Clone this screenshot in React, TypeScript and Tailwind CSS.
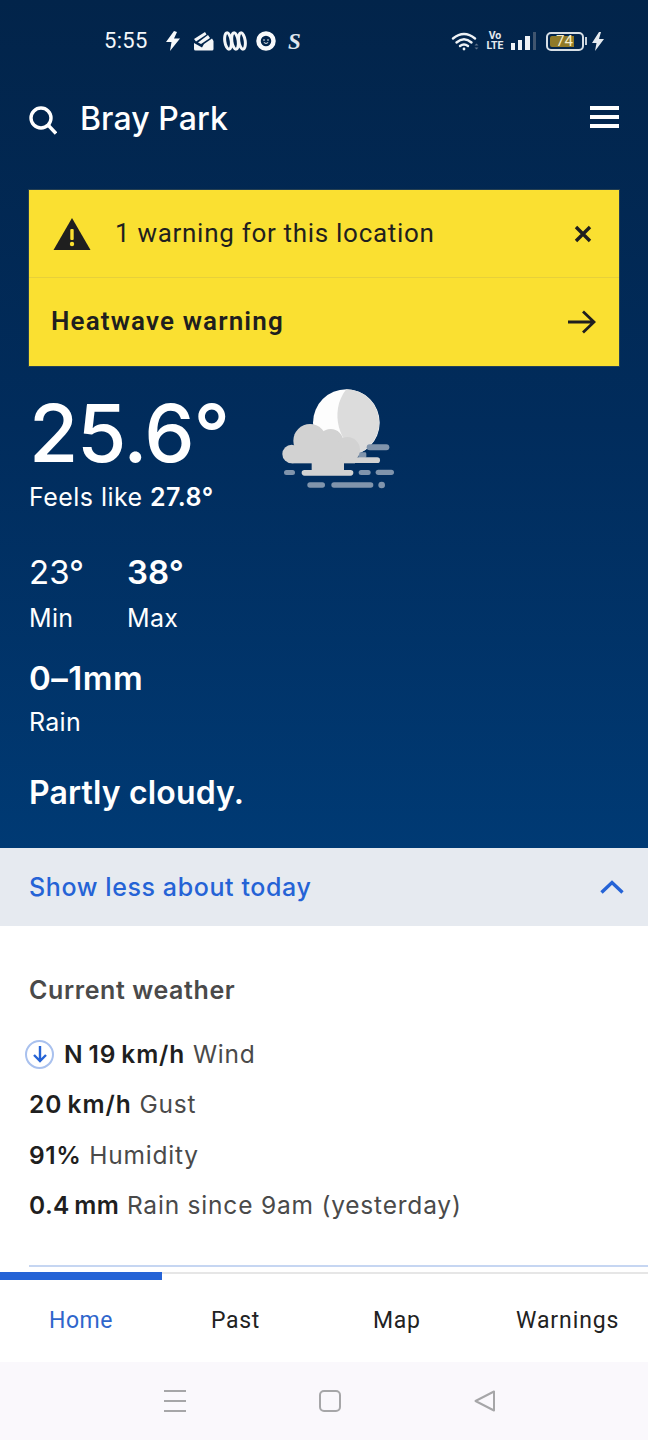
import React from "react";

const inter = "font-['Inter',sans-serif]";
const roboto = "font-['Roboto',sans-serif]";

function StatusLeft() {
  return (
    <div className="flex items-center pl-[104px]">
      <span className={`${roboto} text-[22px] leading-none text-[#f4f7fa] tracking-[0.3px] w-[60px]`}>5:55</span>
      <svg width="18" height="20" viewBox="0 0 18 20"><path d="M10 0 2 11h5.500L6 20l10-12.500h-6L13 1z" fill="#f8fafc" /></svg>
      <svg width="21" height="20" viewBox="0 0 21 20" className="ml-[11px]" fill="#f4f6f8"><path d="M1 8 12 1l1.500 2.500L3 10.500zM5 11.500 15 4l2 3L8 13zM11 13l8-5.500 1.500 2.500v8a1.500 1.500 0 0 1-1.500 1.500H2.500A1.500 1.500 0 0 1 1 18v-6l8 4.500z" /></svg>
      <svg width="24" height="20" viewBox="0 0 24 20" className="ml-[9px]" fill="none" stroke="#f4f6f8" strokeWidth="3"><ellipse cx="5" cy="10" rx="3.200" ry="8.200" transform="rotate(-8 5 10)" /><ellipse cx="12" cy="10" rx="3.200" ry="8.200" transform="rotate(-8 12 10)" /><ellipse cx="19" cy="10" rx="3.200" ry="8.200" transform="rotate(-8 19 10)" /></svg>
      <svg width="20" height="20" viewBox="0 0 20 20" className="ml-[9px]"><circle cx="10" cy="10" r="7.500" fill="none" stroke="#f8fafc" strokeWidth="4.500" /><circle cx="8" cy="9" r="0.800" fill="#f8fafc" /><circle cx="12" cy="9" r="0.800" fill="#f8fafc" /><path d="M7.800 11.500q2.200 2 4.400 0" stroke="#f8fafc" fill="none" strokeWidth="0.900" /></svg>
      <span className="ml-[12px] font-['Liberation_Serif',serif] italic font-bold text-[23px] leading-none text-[#dfe6ee]">S</span>
    </div>
  );
}

function StatusRight() {
  return (
    <div className="flex items-center pr-[44px]">
      <svg width="28" height="20" viewBox="0 0 28 20" fill="none" stroke="#eef2f6" strokeLinecap="round" strokeWidth="2.400"><path d="M2 7.500Q13-1.500 24 7.500" /><path d="M5.500 11.500Q13 5 20.500 11.500" /><path d="M9 15Q13 12 17 15" /><circle cx="13" cy="18" r="1.400" fill="#eef2f6" stroke="none" /><path d="M23.500 14.500l2-2 2 2zM23.500 16.500l2 2 2-2z" fill="#5f738a" stroke="none" /></svg>
      <div className={`ml-[9px] w-[14px] flex flex-col items-center ${roboto} text-[10.500px] leading-[10px] font-bold text-[#e5eaef]`}><span>Vo</span><span>LTE</span></div>
      <div className="ml-[9px] flex items-end gap-[3px] h-[18px]">
        <span className="w-[4px] h-[7px] bg-[#eef2f6]" />
        <span className="w-[4px] h-[10px] bg-[#eef2f6]" />
        <span className="w-[5px] h-[14px] bg-[#eef2f6]" />
        <span className="w-[3px] h-[18px] bg-[#40556f]" />
      </div>
      <div className="ml-[10px] w-[38px] h-[19px] border-2 border-[#d7dfe6] rounded-[5px] p-[2px] flex">
        <span className={`w-[24px] bg-[#8f7a28] rounded-l-[2px] pl-[6px] ${roboto} text-[15px] leading-[11px] text-[#f3eccb]`}>74</span>
      </div>
      <span className="w-[2px] h-[8px] ml-[1px] bg-[#c6d0da]" />
      <svg width="12" height="19" viewBox="0 0 12 19" className="ml-[5px]"><path d="M7 0 0 11h4.500L3 19l9-12H7l2-7z" fill="#e5eaef" /></svg>
    </div>
  );
}

function WeatherIcon() {
  return (
    <svg width="150" height="125" viewBox="0 0 450 375">
      <circle cx="259" cy="143" r="100" fill="#fdfdfd" />
      <path d="M259 43a100 100 0 0 1 42 190C240 215 205 110 259 43z" fill="#dcdcdc" />
      <g fill="#8094ac">
        <rect x="320" y="208" width="68" height="18" rx="9" />
        <rect x="295" y="232" width="24" height="16" rx="4" />
        <rect x="72" y="285" width="33" height="15" rx="7.500" />
        <rect x="296" y="285" width="36" height="15" rx="7.500" />
        <rect x="347" y="284" width="55" height="16" rx="8" />
        <rect x="142" y="322" width="53" height="16" rx="8" />
        <rect x="214" y="322" width="126" height="16" rx="8" />
        <circle cx="365" cy="330" r="10" />
      </g>
      <g fill="#d2d2d2">
        <circle cx="150" cy="197" r="50" />
        <circle cx="212" cy="200" r="38" />
        <circle cx="262" cy="224" r="38" />
        <circle cx="95" cy="237" r="28" />
        <rect x="95" y="215" width="190" height="50" />
        <rect x="240" y="247" width="120" height="17" rx="8.500" />
        <rect x="155" y="260" width="97" height="30" />
        <rect x="125" y="285" width="155" height="17" rx="8.500" />
      </g>
    </svg>
  );
}

export default function App() {
  const b = "font-semibold text-[#1f1f1f]";
  return (
    <div className={`w-[648px] h-[1440px] bg-white flex flex-col overflow-hidden ${inter}`}>
      <div className="h-[848px] shrink-0 bg-gradient-to-b from-[#02244a] via-[#012c5c] to-[#003a74] text-white flex flex-col">
        <div className="h-[82px] flex items-center justify-between">
          <StatusLeft />
          <StatusRight />
        </div>
        <div className="h-[76px] pl-[29px] pr-[29px] flex items-center justify-between">
          <div className="flex items-center">
            <svg width="28" height="29" viewBox="0 0 28 29" fill="none" stroke="#fff" strokeWidth="3.400"><circle cx="12" cy="12" r="10" /><path d="M19 19l8 8.500" /></svg>
            <span className="ml-[23px] mb-[2px] text-[32px] leading-none font-medium tracking-[0.1px]">Bray Park</span>
          </div>
          <div className="flex flex-col gap-[5px] mb-[6px]">
            <span className="w-[29px] h-[4px] bg-white" />
            <span className="w-[29px] h-[4px] bg-white" />
            <span className="w-[29px] h-[4px] bg-white" />
          </div>
        </div>
        <div className="mx-[29px] mt-[32px] h-[176px] shrink-0 bg-[#fae031] text-[#1f1f1f] flex flex-col shadow-[0_0_0_1px_rgba(120,120,80,0.3)]">
          <div className={`h-[88px] flex items-center pl-[24px] pr-[24px] border-b border-[#e7d03a] ${roboto}`}>
            <svg width="38" height="34" viewBox="0 0 38 34"><path d="M19 1 37.500 33H.5z" fill="#1f1f1f" /><rect x="17.300" y="12" width="3.400" height="11" rx="1" fill="#fae031" /><circle cx="19" cy="27" r="2.200" fill="#fae031" /></svg>
            <span className="ml-[24px] mb-[2px] text-[26px] leading-none tracking-[0.7px]">1 warning for this location</span>
            <svg width="18" height="18" viewBox="0 0 18 18" className="ml-auto mr-[3px]" stroke="#1f1f1f" strokeWidth="3.400"><path d="M2 2l14 14M16 2 2 16" /></svg>
          </div>
          <div className={`flex-1 flex items-center pl-[22px] pr-[23px] ${roboto}`}>
            <span className="mb-[2px] text-[26px] leading-none font-semibold tracking-[1.15px]">Heatwave warning</span>
            <svg width="28" height="24" viewBox="0 0 28 24" className="ml-auto" fill="none" stroke="#1f1f1f" strokeWidth="2.800"><path d="M0 12h26M15 1.500 26 12 15 22.500" /></svg>
          </div>
        </div>
        <div className="pl-[29px] flex items-start">
          <div className="flex flex-col w-[231px] shrink-0">
            <span className="text-[80px] leading-[80px] mt-[27px] font-medium tracking-[-1.200px]">25.6°</span>
            <span className="text-[25px] leading-[28px] mt-[10px] tracking-[0.45px] whitespace-nowrap">Feels like <b className="font-semibold">27.8°</b></span>
          </div>
          <div className="mt-[9px]"><WeatherIcon /></div>
        </div>
        <div className="pl-[29px] mt-[41px] flex">
          <div className="w-[98px] flex flex-col">
            <span className="text-[33px] leading-[40px]">23°</span>
            <span className="text-[25px] leading-[28px] mt-[12px] tracking-[0.3px]">Min</span>
          </div>
          <div className="flex flex-col">
            <span className="text-[33px] leading-[40px] font-semibold">38°</span>
            <span className="text-[25px] leading-[28px] mt-[12px] tracking-[0.3px]">Max</span>
          </div>
        </div>
        <span className="pl-[29px] mt-[26px] text-[33px] leading-[40px] font-semibold tracking-[0.5px]">0–1mm</span>
        <span className="pl-[29px] mt-[10px] text-[25px] leading-[28px] tracking-[0.3px]">Rain</span>
        <span className="pl-[29px] mt-[37px] text-[32px] leading-[40px] font-semibold tracking-[0.15px]">Partly cloudy.</span>
      </div>
      <div className="h-[78px] shrink-0 bg-[#e6eaf0] pl-[29px] pr-[24px] flex items-center justify-between text-[#2563d6]">
        <span className="text-[25px] leading-none font-medium tracking-[0.6px]">Show less about today</span>
        <svg width="24" height="14" viewBox="0 0 24 14" fill="none" stroke="#2563d6" strokeWidth="3.400"><path d="M1.500 12.500 12 2.500l10.500 10" /></svg>
      </div>
      <div className="flex-1 pl-[29px] flex flex-col text-[#4a4a4a] text-[24.500px]">
        <span className="mt-[47px] text-[25px] leading-[34px] font-semibold tracking-[0.6px]">Current weather</span>
        <div className="mt-[33px] flex flex-col gap-[22.400px] tracking-[0.8px]">
          <div className="flex items-center h-[28px] ml-[-5px]">
            <span className="w-[29px] h-[29px] rounded-full border-2 border-[#a9c1ee] flex items-center justify-center ml-[1px] mr-[10px]">
              <svg width="14" height="17" viewBox="0 0 14 17" fill="none" stroke="#2563d6" strokeWidth="2.400"><path d="M7 0v15M1 9l6 6 6-6" /></svg>
            </span>
            <span className="leading-[28px]"><b className={`${b} tracking-[0.9px]`}>N{"\u2009"}19{"\u2009"}km/h</b> Wind</span>
          </div>
          <span className="leading-[28px]"><b className={`${b} tracking-[1px]`}>20{"\u2009"}km/h</b> Gust</span>
          <span className="leading-[28px]"><b className={`${b} tracking-[0.6px]`}>91%</b> Humidity</span>
          <span className="leading-[28px]"><b className={`${b} tracking-[0.4px]`}>0.4{"\u2009"}mm</b> Rain since 9am (yesterday)</span>
        </div>
        <div className="mt-[46px] h-[2px] bg-[#c6d6f2]" />
      </div>
      <div className="shrink-0 h-[90px] bg-white border-t-2 border-[#e6e6e6] relative flex">
        <span className="absolute left-0 top-[-2px] w-[162px] h-[8px] bg-[#2563d6]" />
        <div className={`flex w-full pt-[33px] text-[23px] leading-[28px] tracking-[0.9px] ${roboto} text-[#222]`}>
          <span className="w-[211px] pl-[49px] text-[#2f66cc] tracking-[0.5px]">Home</span>
          <span className="w-[162px] tracking-[0.7px]">Past</span>
          <span className="w-[143px] tracking-[0.7px]">Map</span>
          <span>Warnings</span>
        </div>
      </div>
      <div className="shrink-0 h-[78px] bg-[#faf8fc] flex items-center justify-center pl-[12px]">
        <div className="flex flex-col gap-[8px] mr-[133px]">
          <span className="w-[22px] h-[2px] bg-[#a6a6a8]" />
          <span className="w-[22px] h-[2px] bg-[#a6a6a8]" />
          <span className="w-[22px] h-[2px] bg-[#a6a6a8]" />
        </div>
        <span className="w-[22px] h-[22px] rounded-[5px] border-2 border-[#a6a6a8] mr-[133px]" />
        <svg width="22" height="22" viewBox="0 0 22 22" fill="none" stroke="#a6a6a8" strokeWidth="2" strokeLinejoin="round"><path d="M20 1.500v19L1.500 11z" /></svg>
      </div>
    </div>
  );
}
